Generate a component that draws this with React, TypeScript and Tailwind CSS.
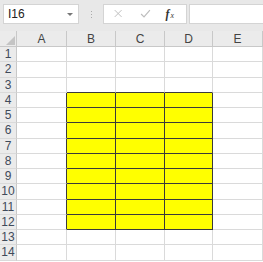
import React from 'react';

/* Excel-like sheet: formula bar + grid with a yellow bordered block B4:D12 */

const COLS = ['A', 'B', 'C', 'D', 'E'];
const ROWS = Array.from({ length: 14 }, (_, i) => i + 1);

const isYellow = (r: number, c: number) => r >= 4 && r <= 12 && c >= 1 && c <= 3;

function Cell({ r, c }: { r: number; c: number }) {
  const yellow = isYellow(r, c);
  const bottomDark = yellow || isYellow(r + 1, c);
  const rightDark = yellow || isYellow(r, c + 1);
  return (
    <div
      className={`h-[15.25px] border-r border-b ${yellow ? 'bg-[#ffff00]' : 'bg-white'} ${
        bottomDark ? 'border-b-[#3a3a3a]' : 'border-b-[#dadada]'
      } ${rightDark ? 'border-r-[#3a3a3a]' : 'border-r-[#dadada]'}`}
    />
  );
}

export default function App() {
  return (
    <div className="w-[263px] h-[262px] overflow-hidden bg-white font-['Liberation_Sans',sans-serif] text-[#333]">
      {/* Formula bar */}
      <div className="flex h-[31px] items-start bg-[#e8e8e8] pt-[4px]">
        <div className="ml-[3px] flex h-[20px] w-[76px] items-center justify-between border border-[#d4d4d4] bg-white pl-[4px] pr-[5px] text-[12px] text-[#222]">
          <span>I16</span>
          <span className="h-0 w-0 border-x-[3px] border-t-[3px] border-x-transparent border-t-[#777]" />
        </div>
        <div className="flex h-[20px] w-[24px] flex-col items-center justify-center gap-[2px]">
          <span className="h-[1px] w-[1px] bg-[#aaa]" />
          <span className="h-[1px] w-[1px] bg-[#aaa]" />
          <span className="h-[1px] w-[1px] bg-[#aaa]" />
        </div>
        <div className="flex h-[20px] w-[84px] items-center border border-[#d4d4d4] bg-white">
          <svg width="84" height="18" viewBox="0 0 84 18">
            <path d="M11 5 L18 12 M18 5 L11 12" stroke="#bdbdbd" strokeWidth="1" fill="none" />
            <path d="M38 9 L41 12 L47 5" stroke="#bdbdbd" strokeWidth="1.2" fill="none" />
            <text x="63" y="13" fontFamily="Liberation Serif, serif" fontStyle="italic" fontWeight="bold" fontSize="12" fill="#333">
              f
            </text>
            <text x="68" y="13" fontFamily="Liberation Serif, serif" fontStyle="italic" fontSize="8" fill="#333">
              x
            </text>
          </svg>
        </div>
        <div className="ml-[2px] h-[20px] flex-1 border border-r-0 border-[#d4d4d4] bg-white" />
      </div>

      {/* Grid */}
      <div className="grid grid-cols-[17px_50px_49px_49px_48px_50px]">
        {/* header row */}
        <div className="relative h-[16px] border-r border-b border-[#c8c8c8] bg-[#ebebeb]">
          <svg className="absolute right-[1px] bottom-[1px]" width="9" height="9" viewBox="0 0 9 9">
            <path d="M9 0 L9 9 L0 9 Z" fill="#c4c4c4" />
          </svg>
        </div>
        {COLS.map((c) => (
          <div
            key={c}
            className="flex h-[16px] items-center justify-center border-r border-b border-[#c8c8c8] bg-[#ebebeb] text-[12px] text-[#444]"
          >
            {c}
          </div>
        ))}

        {ROWS.map((r) => (
          <React.Fragment key={r}>
            <div className="flex h-[15.25px] items-center justify-center border-r border-b border-r-[#c8c8c8] border-b-[#dadada] bg-[#ebebeb] text-[12px] text-[#3f4a5a]">
              {r}
            </div>
            {COLS.map((_, c) => (
              <Cell key={c} r={r} c={c} />
            ))}
          </React.Fragment>
        ))}
      </div>
    </div>
  );
}
